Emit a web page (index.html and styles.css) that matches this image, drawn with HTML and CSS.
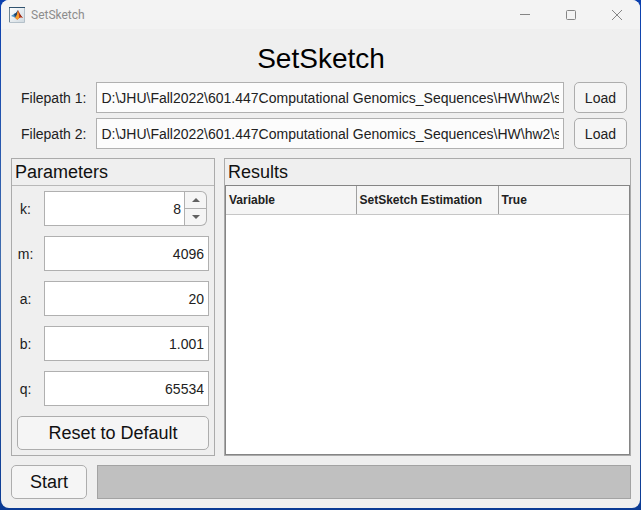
FILE: index.html
```html
<!DOCTYPE html>
<html lang="en">
<head>
<meta charset="utf-8">
<title>SetSketch</title>
<link rel="stylesheet" href="styles.css">
</head>
<body>
<div class="window">
  <header class="titlebar">
    <svg class="app-icon" viewBox="0 0 16 16" aria-hidden="true">
      <defs><linearGradient id="paper" x1="0" y1="0" x2="1" y2="1"><stop offset="0" stop-color="#fff"/><stop offset="1" stop-color="#cfd9e0"/></linearGradient></defs>
      <path fill="url(#paper)" stroke="#b4c0c9" d="M.5.5h15v15H.5z"/>
      <path fill="#30536f" d="M0 0h16v1H0z"/>
      <path fill="#6d8494" d="M0 1h1v14H0z"/>
      <path fill="#4a8fc4" d="M2 9l3-2 2-1 2-3-1 6-2 2-1-1z"/>
      <path fill="#1f4468" d="M5 7l2-1 2-3-1 5-2 2z"/>
      <path fill="#c9401a" d="M9 3c1 2 2 5 5 8-3-1-4 0-6 2 0-1-1-2-2-2 2-2 2-5 3-8z"/>
      <path fill="#f7a02c" d="M9 4c1 3 1 5 1 7l-2 2c0-1-1-2-2-2 2-2 2-4 3-7z"/>
      <path fill="#8a2318" d="M9 3c1 2 2 5 5 8l-3-2z"/>
    </svg>
    <span class="app-name">SetSketch</span>
    <button class="win-btn" aria-label="Minimize"><svg viewBox="0 0 12 12"><path d="M1 5.5h10"/></svg></button>
    <button class="win-btn" aria-label="Maximize"><svg viewBox="0 0 12 12"><rect x="1.500" y="1.500" width="9" height="9" rx="1"/></svg></button>
    <button class="win-btn" aria-label="Close"><svg viewBox="0 0 12 12"><path d="M1 1l10 10M11 1L1 11"/></svg></button>
  </header>
  <main class="content">
    <h1 class="title">SetSketch</h1>
    <div class="files">
      <label for="file1">Filepath 1:</label>
      <input class="field" id="file1" type="text" value="D:\JHU\Fall2022\601.447Computational Genomics_Sequences\HW\hw2\s">
      <button class="btn">Load</button>
      <label for="file2">Filepath 2:</label>
      <input class="field" id="file2" type="text" value="D:\JHU\Fall2022\601.447Computational Genomics_Sequences\HW\hw2\s">
      <button class="btn">Load</button>
    </div>
    <div class="panels">
      <section class="panel params">
        <h2 class="panel-title">Parameters</h2>
        <div class="params-body">
          <div class="param">
            <label for="k">k:</label>
            <div class="spinner">
              <input class="field number" id="k" type="text" inputmode="numeric" value="8">
              <div class="steps">
                <button class="step" aria-label="Increase k"><svg viewBox="0 0 8 4"><path d="M0 4l4-4 4 4z"/></svg></button>
                <button class="step" aria-label="Decrease k"><svg viewBox="0 0 8 4"><path d="M0 0l4 4 4-4z"/></svg></button>
              </div>
            </div>
          </div>
          <div class="param"><label for="m">m:</label><input class="field number" id="m" type="text" inputmode="numeric" value="4096"></div>
          <div class="param"><label for="a">a:</label><input class="field number" id="a" type="text" inputmode="numeric" value="20"></div>
          <div class="param"><label for="b">b:</label><input class="field number" id="b" type="text" inputmode="decimal" value="1.001"></div>
          <div class="param"><label for="q">q:</label><input class="field number" id="q" type="text" inputmode="numeric" value="65534"></div>
          <button class="btn large">Reset to Default</button>
        </div>
      </section>
      <section class="panel results">
        <h2 class="panel-title">Results</h2>
        <div class="table-area">
          <table class="table">
            <colgroup><col class="col-variable"><col class="col-estimate"><col></colgroup>
            <thead><tr><th scope="col">Variable</th><th scope="col">SetSketch Estimation</th><th scope="col">True</th></tr></thead>
          </table>
        </div>
      </section>
    </div>
    <div class="footer">
      <button class="btn large">Start</button>
      <div class="progress" role="progressbar" aria-label="Progress"></div>
    </div>
  </main>
</div>
</body>
</html>
```
FILE: styles.css
```css
* {
  box-sizing: border-box;
}

body {
  margin: 0;
  min-height: 100vh;
  display: flex;
  padding: 0 1px 2px;
  background: linear-gradient(#0a3fae, #3f6cae 50%, #0a3a94);
  font: 14px/18px "Liberation Sans", Arial, sans-serif;
  color: #212121;
}

button,
input {
  font: inherit;
  color: inherit;
  margin: 0;
}

.window {
  flex: 1;
  min-width: 0;
  display: flex;
  flex-direction: column;
  background: #efefef;
  border-radius: 8px;
  overflow: hidden;
}

.titlebar {
  display: flex;
  align-items: center;
  height: 29px;
  padding-left: 8px;
  background: #f3f3f3;
  color: #8c8c8c;
  font: 12px/16px Roboto, "Noto Sans", sans-serif;
}

.app-icon {
  width: 16px;
  height: 16px;
  margin-right: 6px;
}

.app-name {
  flex: 1;
}

.win-btn {
  display: flex;
  align-items: center;
  justify-content: center;
  width: 46px;
  height: 28px;
  padding: 0;
  border: 0;
  background: none;
}

.win-btn svg {
  width: 12px;
  height: 12px;
  fill: none;
  stroke: #858585;
}

.content {
  flex: 1;
  display: flex;
  flex-direction: column;
  gap: 9px;
  padding: 10px 9px 9px 10px;
}

.title {
  margin: 0 0 -5px;
  font-size: 28px;
  font-weight: 400;
  line-height: 39px;
  text-align: center;
  color: #000;
}

.files {
  display: grid;
  grid-template-columns: auto 1fr auto;
  align-items: center;
  gap: 5px 10px;
  padding: 0 4px 0 10px;
}

.field {
  min-width: 0;
  width: 100%;
  height: 31px;
  padding: 0 4px;
  border: 1px solid #b0b0b0;
  background: #fff;
}

.files .field {
  background: #fcfcfc;
}

.btn {
  height: 31px;
  padding: 0 10px;
  border: 1px solid #adadad;
  border-radius: 5px;
  background: #f5f5f5;
}

.btn.large {
  height: 34px;
  padding: 0 18px;
  font-size: 18px;
  color: #111;
}

.panels {
  flex: 1;
  display: flex;
  gap: 9px;
}

.panel {
  display: flex;
  flex-direction: column;
  border: 1px solid #ababab;
}

.params {
  flex: 0 0 204px;
}

.results {
  flex: 1;
  min-width: 0;
}

.panel-title {
  margin: 0;
  padding: 0 3px;
  border-bottom: 1px solid #b8b8b8;
  font-size: 18px;
  font-weight: 400;
  line-height: 26px;
  color: #111;
}

.params-body {
  flex: 1;
  display: flex;
  flex-direction: column;
  justify-content: space-between;
  padding: 5px;
}

.param {
  display: grid;
  grid-template-columns: 17px 1fr;
  align-items: center;
  gap: 10px;
}

.param label {
  text-align: center;
}

.number {
  height: 35px;
  text-align: right;
}

.spinner {
  display: flex;
  padding-right: 2px;
}

.spinner .field {
  flex: 1;
  padding-right: 3px;
}

.steps {
  display: flex;
  flex-direction: column;
  width: 22px;
  border: 1px solid #b0b0b0;
  border-left: 0;
  border-radius: 0 6px 6px 0;
  background: #f5f5f5;
}

.step {
  flex: 1;
  display: flex;
  align-items: center;
  justify-content: center;
  padding: 0;
  border: 0;
  background: none;
}

.step + .step {
  border-top: 1px solid #b0b0b0;
}

.step svg {
  width: 8px;
  height: 4px;
  fill: #616161;
}

.results .panel-title {
  border-bottom: 0;
}

.table-area {
  flex: 1;
  border: 1px solid #858585;
  background: #fff;
}

.table {
  width: 100%;
  table-layout: fixed;
  border-collapse: collapse;
  font-size: 12px;
}

.col-variable {
  width: 130px;
}

.col-estimate {
  width: 142px;
}

.table th {
  height: 28px;
  padding: 0 3px;
  border-bottom: 1px solid #c6c6c6;
  background: #f5f5f5;
  text-align: left;
}

.table th + th {
  border-left: 1px solid #a0a0a0;
}

.footer {
  display: flex;
  gap: 10px;
}

.progress {
  flex: 1;
  border: 1px solid #a3a3a3;
  background: #c0c0c0;
}
```
